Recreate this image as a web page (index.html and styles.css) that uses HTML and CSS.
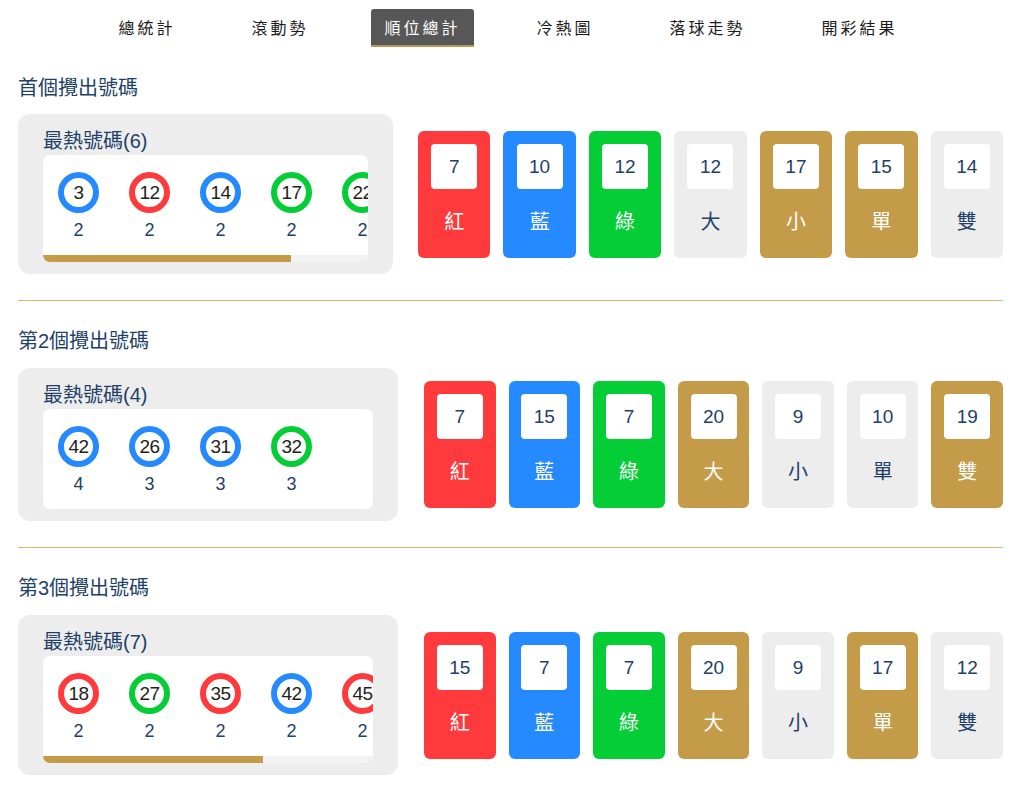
FILE: index.html
```html
<!DOCTYPE html>
<html lang="zh-Hant">
<head>
<meta charset="utf-8">
<title>順位總計</title>
<link rel="stylesheet" href="styles.css">
</head>
<body>
<div class="page">
  <nav class="nav">
    <a class="nav-item">總統計</a>
    <a class="nav-item">滾動勢</a>
    <a class="nav-item is-active">順位總計</a>
    <a class="nav-item">冷熱圖</a>
    <a class="nav-item">落球走勢</a>
    <a class="nav-item">開彩結果</a>
  </nav>

  <section class="section">
    <h2 class="section-title">首個攪出號碼</h2>
    <div class="row">
      <div class="hot hot--narrow">
        <div class="hot-title">最熱號碼(6)</div>
        <div class="hot-list">
          <div class="hot-track">
            <div class="ball-item"><span class="ball ball--blue">3</span><span class="count">2</span></div>
            <div class="ball-item"><span class="ball ball--red">12</span><span class="count">2</span></div>
            <div class="ball-item"><span class="ball ball--blue">14</span><span class="count">2</span></div>
            <div class="ball-item"><span class="ball ball--green">17</span><span class="count">2</span></div>
            <div class="ball-item"><span class="ball ball--green">22</span><span class="count">2</span></div>
            <div class="ball-item"><span class="ball ball--red">24</span><span class="count">2</span></div>
          </div>
          <div class="scrollbar"><div class="scrollbar-thumb" style="width: 76.3%"></div></div>
        </div>
      </div>
      <div class="cards">
        <div class="card card--red"><div class="card-num">7</div><div class="card-label">紅</div></div>
        <div class="card card--blue"><div class="card-num">10</div><div class="card-label">藍</div></div>
        <div class="card card--green"><div class="card-num">12</div><div class="card-label">綠</div></div>
        <div class="card card--gray"><div class="card-num">12</div><div class="card-label">大</div></div>
        <div class="card card--gold"><div class="card-num">17</div><div class="card-label">小</div></div>
        <div class="card card--gold"><div class="card-num">15</div><div class="card-label">單</div></div>
        <div class="card card--gray"><div class="card-num">14</div><div class="card-label">雙</div></div>
      </div>
    </div>
  </section>

  <section class="section">
    <h2 class="section-title">第2個攪出號碼</h2>
    <div class="row row--wide">
      <div class="hot">
        <div class="hot-title">最熱號碼(4)</div>
        <div class="hot-list">
          <div class="hot-track">
            <div class="ball-item"><span class="ball ball--blue">42</span><span class="count">4</span></div>
            <div class="ball-item"><span class="ball ball--blue">26</span><span class="count">3</span></div>
            <div class="ball-item"><span class="ball ball--blue">31</span><span class="count">3</span></div>
            <div class="ball-item"><span class="ball ball--green">32</span><span class="count">3</span></div>
          </div>
        </div>
      </div>
      <div class="cards">
        <div class="card card--red"><div class="card-num">7</div><div class="card-label">紅</div></div>
        <div class="card card--blue"><div class="card-num">15</div><div class="card-label">藍</div></div>
        <div class="card card--green"><div class="card-num">7</div><div class="card-label">綠</div></div>
        <div class="card card--gold"><div class="card-num">20</div><div class="card-label">大</div></div>
        <div class="card card--gray"><div class="card-num">9</div><div class="card-label">小</div></div>
        <div class="card card--gray"><div class="card-num">10</div><div class="card-label">單</div></div>
        <div class="card card--gold"><div class="card-num">19</div><div class="card-label">雙</div></div>
      </div>
    </div>
  </section>

  <section class="section section--last">
    <h2 class="section-title">第3個攪出號碼</h2>
    <div class="row row--wide">
      <div class="hot">
        <div class="hot-title">最熱號碼(7)</div>
        <div class="hot-list">
          <div class="hot-track">
            <div class="ball-item"><span class="ball ball--red">18</span><span class="count">2</span></div>
            <div class="ball-item"><span class="ball ball--green">27</span><span class="count">2</span></div>
            <div class="ball-item"><span class="ball ball--red">35</span><span class="count">2</span></div>
            <div class="ball-item"><span class="ball ball--blue">42</span><span class="count">2</span></div>
            <div class="ball-item"><span class="ball ball--red">45</span><span class="count">2</span></div>
            <div class="ball-item"><span class="ball ball--green">5</span><span class="count">2</span></div>
            <div class="ball-item"><span class="ball ball--red">8</span><span class="count">2</span></div>
          </div>
          <div class="scrollbar"><div class="scrollbar-thumb" style="width: 66.7%"></div></div>
        </div>
      </div>
      <div class="cards">
        <div class="card card--red"><div class="card-num">15</div><div class="card-label">紅</div></div>
        <div class="card card--blue"><div class="card-num">7</div><div class="card-label">藍</div></div>
        <div class="card card--green"><div class="card-num">7</div><div class="card-label">綠</div></div>
        <div class="card card--gold"><div class="card-num">20</div><div class="card-label">大</div></div>
        <div class="card card--gray"><div class="card-num">9</div><div class="card-label">小</div></div>
        <div class="card card--gold"><div class="card-num">17</div><div class="card-label">單</div></div>
        <div class="card card--gray"><div class="card-num">12</div><div class="card-label">雙</div></div>
      </div>
    </div>
  </section>
</div>
</body>
</html>
```

FILE: styles.css
```css
* { box-sizing: border-box; }

html, body {
  margin: 0;
  padding: 0;
  background: #ffffff;
}

body {
  font-family: "Liberation Sans", "Noto Sans CJK TC", sans-serif;
  color: #223f68;
}

.page {
  margin: 0 21px 0 18px;
  overflow: hidden;
}

/* ---------- nav ---------- */
.nav {
  display: flex;
  justify-content: center;
  gap: 50px;
  padding-top: 9px;
  padding-right: 5px;
}

.nav-item {
  display: block;
  height: 38px;
  padding: 0 13px;
  font-family: "Noto Sans CJK TC", sans-serif;
  font-size: 16px;
  letter-spacing: 3px;
  line-height: 36px;
  color: #1a1a1a;
  border-bottom: 2px solid transparent;
  border-radius: 3px 3px 0 0;
}

.nav-item.is-active {
  background: #575757;
  color: #ffffff;
  border-bottom-color: #b89a55;
}

/* ---------- sections ---------- */
.section {
  padding: 27px 0 26px;
  border-bottom: 1px solid #d9b773;
}

.section + .section {
  padding-top: 26px;
}

.section--last {
  border-bottom: none;
}

.section-title {
  margin: 0 0 12px;
  font-size: 20px;
  line-height: 28px;
  font-weight: 400;
  color: #223f68;
}

.section + .section .section-title {
  margin-bottom: 13px;
}

.row {
  display: flex;
  align-items: center;
  gap: 25px;
}

.row--wide {
  gap: 26px;
}

/* ---------- hot numbers box ---------- */
.hot {
  flex: 0 0 380px;
  width: 380px;
  background: #ededed;
  border-radius: 12px;
  padding: 14px 25px 12px;
}

.hot--narrow {
  flex-basis: 375px;
  width: 375px;
}

.hot-title {
  font-size: 20px;
  line-height: 26px;
  margin-bottom: 1px;
  color: #223f68;
}

.hot-list {
  background: #ffffff;
  border-radius: 7px;
  overflow: hidden;
}

.hot-track {
  display: flex;
  overflow: hidden;
}

.scrollbar {
  height: 7px;
  background: #f2f2f2;
}

.scrollbar-thumb {
  height: 100%;
  background: #c49b48;
}

.ball-item {
  flex: 0 0 71px;
  width: 71px;
  display: flex;
  flex-direction: column;
  align-items: center;
  padding: 17px 0 14px;
}

.ball {
  display: flex;
  align-items: center;
  justify-content: center;
  width: 41px;
  height: 41px;
  border-radius: 50%;
  border: 6px solid #2589ff;
  background: #ffffff;
  font-size: 19px;
  color: #231f1a;
  letter-spacing: -0.5px;
}

.ball--blue { border-color: #2589ff; }
.ball--red { border-color: #ff3a3c; }
.ball--green { border-color: #04cd36; }

.count {
  margin-top: 6px;
  font-size: 18px;
  line-height: 22px;
  color: #223f68;
}

/* ---------- cards ---------- */
.cards {
  flex: 1;
  display: flex;
  gap: 13px;
}

.card {
  flex: 1;
  border-radius: 6px;
  padding: 13px 0 22px;
  display: flex;
  flex-direction: column;
  align-items: center;
  color: #ffffff;
}

.card--red { background: #ff3a3c; }
.card--blue { background: #2589ff; }
.card--green { background: #04cd36; }
.card--gold { background: #c49b48; }
.card--gray { background: #ededed; color: #223f68; }

.card-num {
  width: 46px;
  height: 45px;
  background: #ffffff;
  border-radius: 4px;
  text-align: center;
  line-height: 45px;
  font-size: 19px;
  color: #223f68;
}

.card-label {
  margin-top: 19px;
  font-size: 20px;
  line-height: 28px;
}
```
